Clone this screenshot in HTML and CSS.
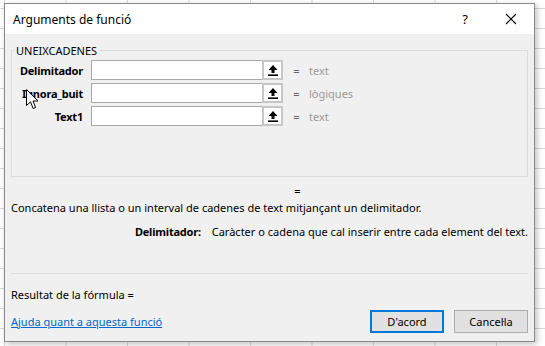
FILE: index.html
```html
<!DOCTYPE html>
<html lang="ca">
<head>
  <meta charset="UTF-8" />
  <title>Arguments de funció</title>
  <link rel="stylesheet" href="styles.css">
</head>
<body>
  <div class="dialog">
    <!-- Title bar -->
    <div class="titleBar">
      <span class="title">Arguments de funció</span>
      <span class="helpBtn">?</span>
      <span class="closeBtn">
        <svg width="12" height="12" viewBox="0 0 12 12"><path d="M1 1 L11 11 M11 1 L1 11" stroke="#000" stroke-width="1.1" fill="none"/></svg>
      </span>
    </div>

    <div class="body">
      <fieldset class="groupBox">
        <legend>UNEIXCADENES</legend>
        <div class="argGrid">
          <label>Delimitador</label>
          <div class="argInput"></div>
          <div class="refBtn"><svg width="10" height="11" viewBox="0 0 10 11"><path d="M5 0 L9.5 5 L6.5 5 L6.5 8 L3.5 8 L3.5 5 L0.5 5 Z" fill="#000"/><rect x="0" y="9.4" width="10" height="1.6" fill="#000"/></svg></div>
          <span class="eq">=</span>
          <span class="argValue">text</span>

          <label>Ignora_buit</label>
          <div class="argInput"></div>
          <div class="refBtn"><svg width="10" height="11" viewBox="0 0 10 11"><path d="M5 0 L9.5 5 L6.5 5 L6.5 8 L3.5 8 L3.5 5 L0.5 5 Z" fill="#000"/><rect x="0" y="9.4" width="10" height="1.6" fill="#000"/></svg></div>
          <span class="eq">=</span>
          <span class="argValue">lògiques</span>

          <label>Text1</label>
          <div class="argInput"></div>
          <div class="refBtn"><svg width="10" height="11" viewBox="0 0 10 11"><path d="M5 0 L9.5 5 L6.5 5 L6.5 8 L3.5 8 L3.5 5 L0.5 5 Z" fill="#000"/><rect x="0" y="9.4" width="10" height="1.6" fill="#000"/></svg></div>
          <span class="eq">=</span>
          <span class="argValue">text</span>
        </div>
      </fieldset>

      <div class="resultEq">=</div>
      <p class="description">Concatena una llista o un interval de cadenes de text mitjançant un delimitador.</p>
      <p class="argHelp"><strong>Delimitador:</strong> Caràcter o cadena que cal inserir entre cada element del text.</p>

      <div class="separator"></div>
      <p class="formulaResult">Resultat de la fórmula =</p>

      <div class="footer">
        <a href="#" class="helpLink">Ajuda quant a aquesta funció</a>
        <button class="btn btnDefault">D'acord</button>
        <button class="btn">Cancel·la</button>
      </div>
    </div>
  </div>

  <!-- mouse pointer -->
  <svg class="cursor" width="13" height="21" viewBox="0 0 13 21">
    <path d="M0.5 0.5 L0.5 16.5 L4.5 12.8 L7.2 19.5 L9.6 18.5 L7 12 L12 12 Z" fill="#fff" stroke="#000" stroke-width="1" stroke-linejoin="miter"/>
  </svg>
</body>
</html>
```

FILE: styles.css
```css
body {
  margin: 0;
  width: 545px;
  height: 346px;
  overflow: hidden;
  position: relative;
  font-family: "Noto Sans", sans-serif;
  font-size: 11px;
  color: #000;
  background-color: #fff;
  background-image:
    linear-gradient(to right, #d9d9d9 1px, transparent 1px),
    linear-gradient(to bottom, #d9d9d9 1px, transparent 1px);
  background-size: 61.5px 100%, 100% 20px;
  background-position: 4px 0, 0 8px;
}

.dialog {
  margin: 3px 0 0 4px;
  width: 529px;
  height: 337px;
  border: 1px solid #8a8a8a;
  background-color: #f0f0f0;
  box-shadow: 2px 2px 6px rgba(0,0,0,0.25);
  display: flex;
  flex-direction: column;
}

.titleBar {
  height: 30px;
  background-color: #fff;
  display: flex;
  align-items: center;
  padding: 0 0 0 8px;
}

.title {
  flex: 1;
  font-size: 12px;
}

.helpBtn {
  width: 46px;
  text-align: center;
  font-size: 13px;
}

.closeBtn {
  width: 46px;
  display: flex;
  justify-content: center;
}

.body {
  padding: 9px 6px 0 6px;
  display: flex;
  flex-direction: column;
}

.groupBox {
  margin: 0;
  padding: 2px 0 0 0;
  height: 130px;
  border: 1px solid #dcdcdc;
}

.groupBox legend {
  padding: 0 2px;
  margin-left: 2px;
  font-size: 11px;
}

.argGrid {
  display: grid;
  grid-template-columns: 79px 171px 21px 24px auto;
  column-gap: 0;
  row-gap: 3px;
  align-items: center;
}

.argGrid label {
  font-weight: bold;
  text-align: right;
  padding-right: 8px;
  font-size: 11px;
  letter-spacing: -0.2px;
  white-space: nowrap;
}

.argInput {
  height: 18px;
  border: 1px solid #a9a9a9;
  border-right: none;
  background-color: #fff;
}

.refBtn {
  height: 16px;
  border: 2px solid #c6c6c6;
  background-color: #fff;
  display: flex;
  align-items: center;
  justify-content: center;
}

.eq {
  text-align: center;
  color: #666;
  padding-left: 3px;
}

.argValue {
  color: #9a9a9a;
  padding-left: 2px;
}

.resultEq {
  margin-top: 6px;
  text-align: center;
  padding-left: 56px;
  line-height: 16px;
}

.description {
  margin: 0;
  line-height: 18px;
}

.argHelp {
  margin: 6px 0 0 0;
  text-align: right;
  line-height: 18px;
}

.argHelp strong {
  margin-right: 8px;
  letter-spacing: -0.2px;
}

.separator {
  margin-top: 32px;
  border-top: 1px solid #dcdcdc;
}

.formulaResult {
  margin: 12px 0 0 0;
  line-height: 18px;
}

.footer {
  margin-top: 6px;
  display: flex;
  align-items: center;
  gap: 10px;
}

.helpLink {
  flex: 1;
  color: #0066cc;
}

.btn {
  width: 74px;
  height: 23px;
  font-family: "Noto Sans", sans-serif;
  font-size: 11px;
  background-color: #e1e1e1;
  border: 1px solid #adadad;
  padding: 0;
}

.btnDefault {
  border: 2px solid #0078d7;
}

.cursor {
  position: absolute;
  left: 26px;
  top: 89px;
}
```
